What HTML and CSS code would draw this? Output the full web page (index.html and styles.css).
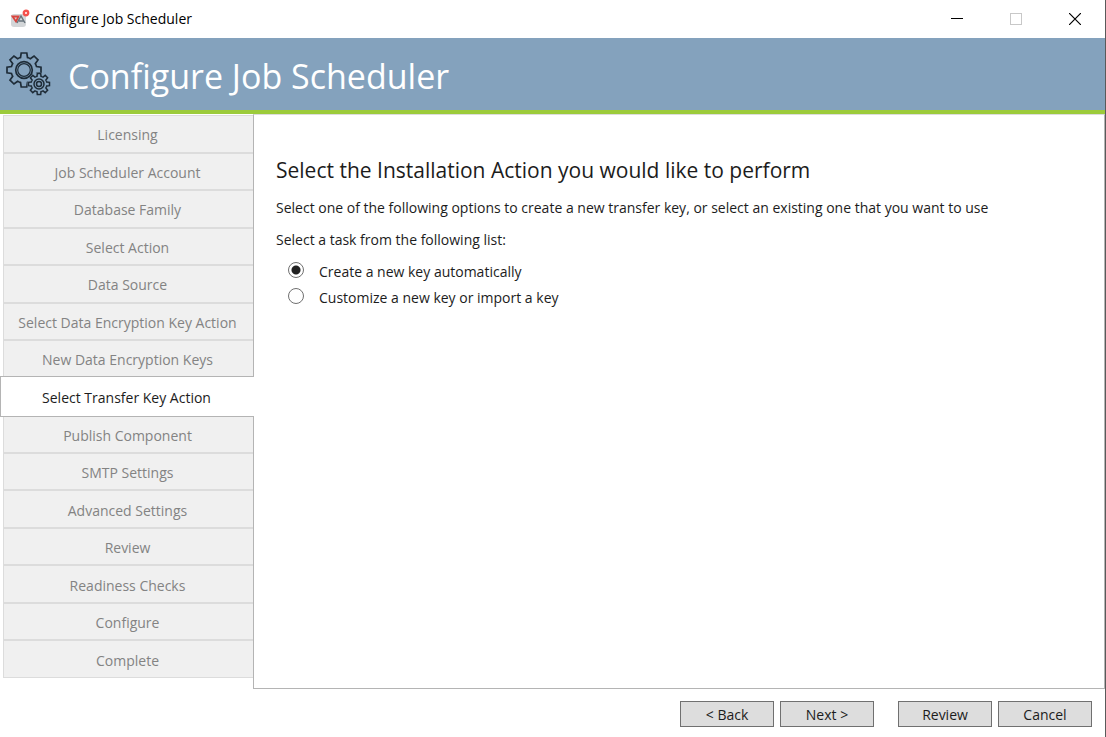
FILE: index.html
```
<!DOCTYPE html>
<html lang="en">
<head>
  <meta charset="UTF-8">
  <meta name="viewport" content="width=device-width, initial-scale=1.0">
  <title>Configure Job Scheduler</title>
  <link rel="stylesheet" href="styles.css">
</head>
<body>

  <!-- Title bar -->
  <div class="titlebar">
    <svg class="app-icon" width="20" height="20" viewBox="0 0 20 20" aria-hidden="true">
      <rect x="1" y="5" width="15" height="13" rx="3" fill="#d3d6d8"/>
      <path d="M2.5 7.5h6L6 12.5z" fill="none" stroke="#d9453f" stroke-width="1.8"/>
      <path d="M7 14l4-7 4 7M9 12h5" fill="none" stroke="#68747c" stroke-width="1.5"/>
      <circle cx="16" cy="4" r="2.2" fill="#fff" stroke="#f4514d" stroke-width="2.4"/>
    </svg>
    <span class="titlebar-text">Configure Job Scheduler</span>
    <div class="window-buttons">
      <button type="button" aria-label="Minimize">
        <svg width="12" height="12" viewBox="0 0 12 12"><path d="M0 5.5h12" stroke="#000"/></svg>
      </button>
      <button type="button" aria-label="Maximize" disabled>
        <svg width="12" height="12" viewBox="0 0 12 12"><rect x="0.5" y="0.5" width="11" height="11" fill="none" stroke="#c8c8c8"/></svg>
      </button>
      <button type="button" aria-label="Close">
        <svg width="12" height="12" viewBox="0 0 12 12"><path d="M0 0l12 12M12 0L0 12" stroke="#000" stroke-width="1.2"/></svg>
      </button>
    </div>
  </div>

  <!-- Banner -->
  <header class="banner">
    <svg class="gears" width="46" height="46" viewBox="0 0 46 46" fill="none" stroke="#1e2c38" aria-hidden="true">
      <defs>
        <path id="tooth" d="M-4.97-12.01L-3.5-12.5L-2.8-17H2.8L3.5-12.5L4.97-12.01"/>
        <path id="small-tooth" d="M-3.06-7.39L-2-7.7L-1.7-10.5H1.7L2-7.7L3.06-7.39"/>
      </defs>
      <g transform="translate(19 19)" stroke-width="1.7">
        <use href="#tooth"/>
        <use href="#tooth" transform="rotate(45)"/>
        <use href="#tooth" transform="rotate(90)"/>
        <use href="#tooth" transform="rotate(135)"/>
        <use href="#tooth" transform="rotate(180)"/>
        <use href="#tooth" transform="rotate(225)"/>
        <use href="#tooth" transform="rotate(270)"/>
        <use href="#tooth" transform="rotate(315)"/>
        <circle r="8.3"/>
        <circle r="6.3" stroke-width="1.2"/>
      </g>
      <g transform="translate(34 33)" stroke-width="1.5">
        <circle r="11.5" fill="#84a2bd" stroke="none"/>
        <use href="#small-tooth"/>
        <use href="#small-tooth" transform="rotate(45)"/>
        <use href="#small-tooth" transform="rotate(90)"/>
        <use href="#small-tooth" transform="rotate(135)"/>
        <use href="#small-tooth" transform="rotate(180)"/>
        <use href="#small-tooth" transform="rotate(225)"/>
        <use href="#small-tooth" transform="rotate(270)"/>
        <use href="#small-tooth" transform="rotate(315)"/>
        <circle r="5"/>
        <circle r="2.5"/>
      </g>
    </svg>
    <h1>Configure Job Scheduler</h1>
  </header>

  <div class="wizard">
    <!-- Steps -->
    <nav class="steps">
      <button type="button" class="step">Licensing</button>
      <button type="button" class="step">Job Scheduler Account</button>
      <button type="button" class="step">Database Family</button>
      <button type="button" class="step">Select Action</button>
      <button type="button" class="step">Data Source</button>
      <button type="button" class="step">Select Data Encryption Key Action</button>
      <button type="button" class="step">New Data Encryption Keys</button>
      <button type="button" class="step active" aria-current="step">Select Transfer Key Action</button>
      <button type="button" class="step">Publish Component</button>
      <button type="button" class="step">SMTP Settings</button>
      <button type="button" class="step">Advanced Settings</button>
      <button type="button" class="step">Review</button>
      <button type="button" class="step">Readiness Checks</button>
      <button type="button" class="step">Configure</button>
      <button type="button" class="step">Complete</button>
    </nav>

    <!-- Current page -->
    <main class="page">
      <h2>Select the Installation Action you would like to perform</h2>
      <p>Select one of the following options to create a new transfer key, or select an existing one that you want to use</p>
      <p id="taskLabel">Select a task from the following list:</p>
      <div class="options" role="radiogroup" aria-labelledby="taskLabel">
        <label class="option"><input type="radio" name="task" value="create" checked>Create a new key automatically</label>
        <label class="option"><input type="radio" name="task" value="customize">Customize a new key or import a key</label>
      </div>
    </main>
  </div>

  <!-- Wizard buttons -->
  <footer class="actions">
    <div class="action-group">
      <button type="button">&lt; Back</button>
      <button type="button">Next &gt;</button>
    </div>
    <div class="action-group">
      <button type="button">Review</button>
      <button type="button">Cancel</button>
    </div>
  </footer>

</body>
</html>
```
FILE: styles.css
```
* {
  box-sizing: border-box;
}

body {
  font-family: "Open Sans", "Noto Sans", sans-serif;
  font-size: 14px;
  line-height: 20px;
  color: #1c1c1c;
  background-color: #fff;
  margin: 0;
  min-height: 100vh;
  display: flex;
  flex-direction: column;
  border-right: 1px solid #5a5a5a;
}

button {
  font: inherit;
  color: inherit;
  padding: 0;
  cursor: pointer;
}

/* Title bar */
.titlebar {
  display: flex;
  align-items: center;
  height: 38px;
  padding: 0 1px 0 10px;
  color: #000;
}

.titlebar-text {
  margin-left: 5px;
}

.window-buttons {
  display: flex;
  height: 100%;
  margin-left: auto;
}

.window-buttons button {
  display: flex;
  align-items: center;
  justify-content: center;
  width: 59px;
  border: none;
  background: none;
}

/* Banner */
.banner {
  display: flex;
  align-items: center;
  height: 76px;
  padding: 0 5px;
  background-color: #84a2bd;
  border-bottom: 4px solid #9ccb3b;
}

.banner h1 {
  margin: 0 0 0 17px;
  padding-top: 4px;
  font-size: 34px;
  line-height: 44px;
  font-weight: 400;
  color: #fff;
}

/* Steps and page */
.wizard {
  display: flex;
  flex: 1;
}

.steps {
  display: grid;
  grid-auto-rows: 1fr;
  width: 253px;
  flex-shrink: 0;
  padding: 1px 0 11px 3px;
}

.step {
  padding: 3px 2px 0 0;
  border: 1px solid #dcdcdc;
  border-right: none;
  background-color: #f0f0f0;
  color: #838383;
}

.step.active {
  position: relative;
  margin: -2px -1px -2px -3px;
  border-color: #b4b4b4;
  background-color: #fff;
  color: #1c1c1c;
}

.page {
  flex: 1;
  padding: 39px 22px;
  border: 1px solid #b4b4b4;
  border-top-color: #dcdcdc;
}

.page h2 {
  margin: 0 0 12px;
  font-size: 21px;
  line-height: 32px;
  font-weight: 400;
}

.page p {
  margin: 0 0 12px;
}

.options {
  display: grid;
  gap: 6px;
  padding-left: 12px;
}

.option {
  display: flex;
  align-items: center;
  gap: 15px;
}

.option input {
  appearance: none;
  width: 16px;
  height: 16px;
  margin: 0 0 4px;
  border: 1px solid #707070;
  border-radius: 50%;
  background-color: #fff;
}

.option input:checked {
  background-image: radial-gradient(circle, #212121 4px, #fff 5px);
}

/* Wizard buttons */
.actions {
  display: flex;
  justify-content: flex-end;
  gap: 24px;
  padding: 12px 13px 10px;
}

.action-group {
  display: flex;
  gap: 6px;
}

.action-group button {
  width: 94px;
  height: 26px;
  padding-top: 2px;
  border: 1px solid #707070;
  background-color: #ddd;
}
```
